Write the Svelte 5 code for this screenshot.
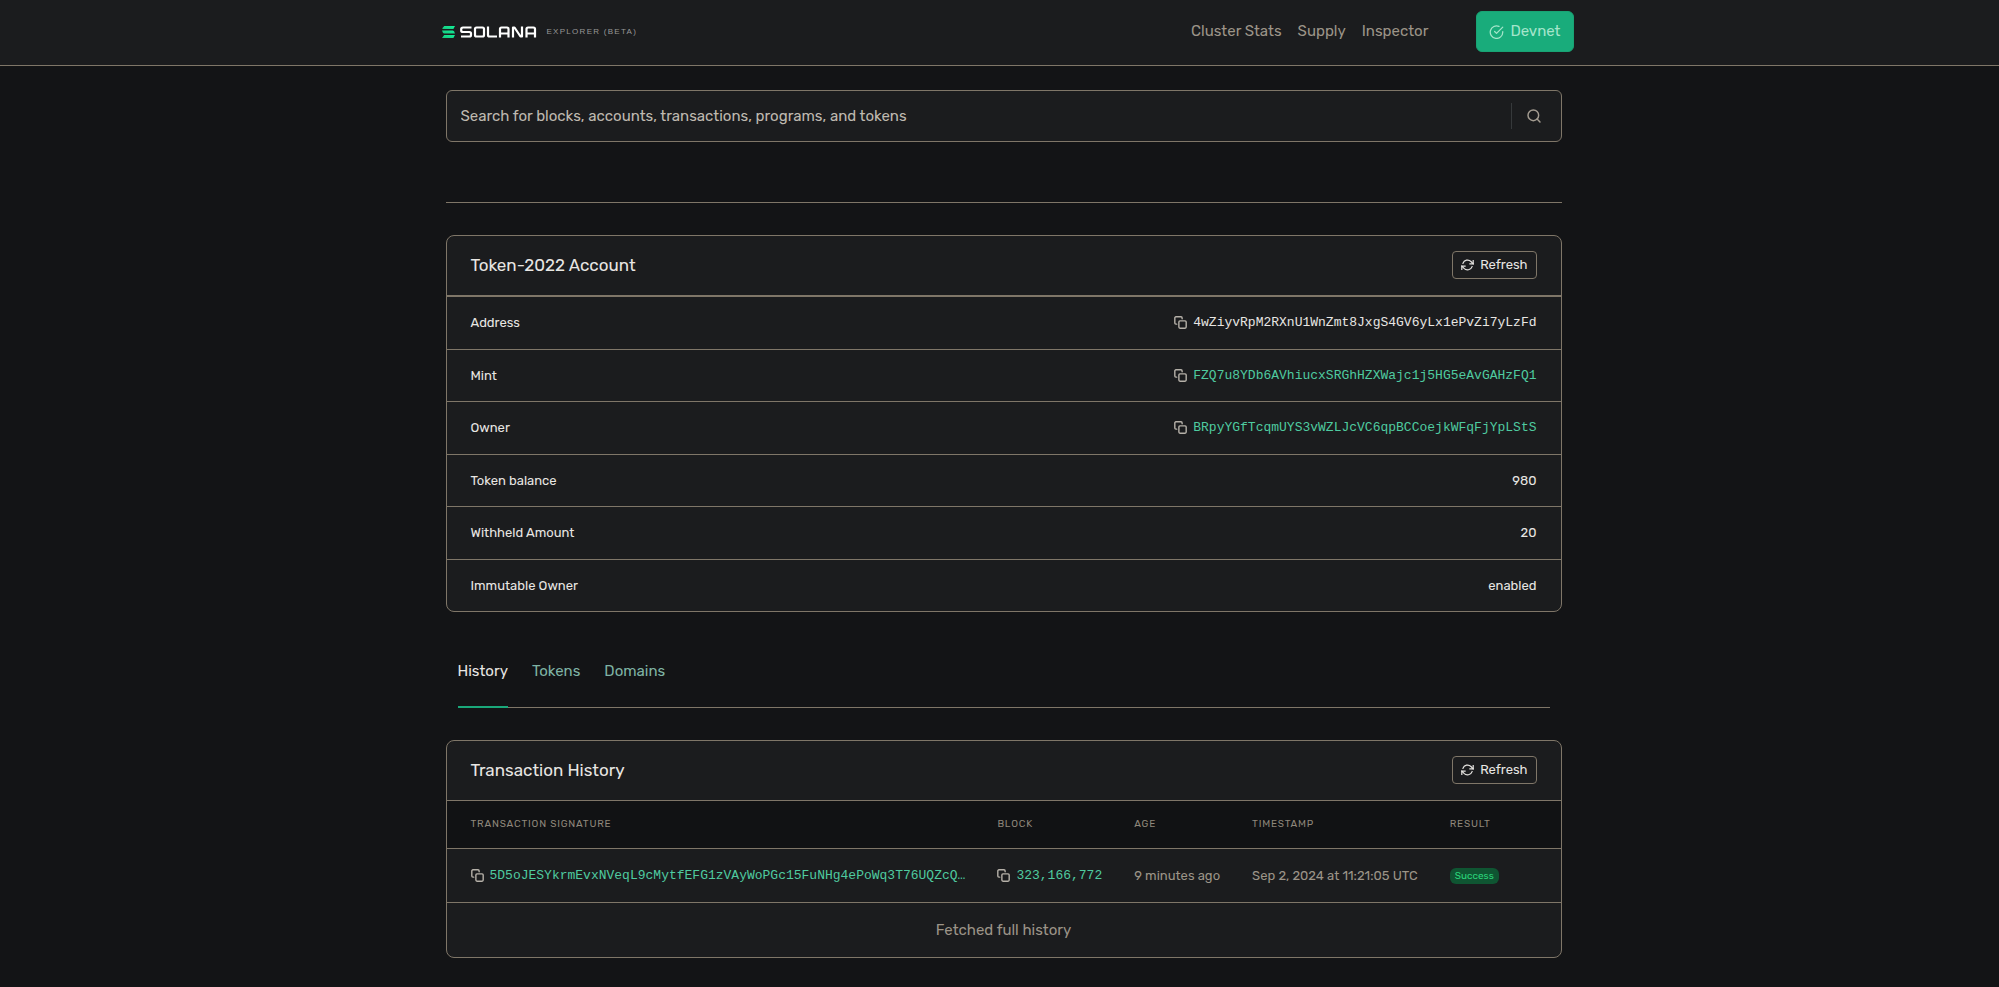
<script>
  const endpoint = 'Devnet';
  let search = $state('');

  const nav = ['Cluster Stats', 'Supply', 'Inspector'];

  const rows = [
    { label: 'Address', value: '4wZiyvRpM2RXnU1WnZmt8JxgS4GV6yLx1ePvZi7yLzFd', copy: true },
    { label: 'Mint', value: 'FZQ7u8YDb6AVhiucxSRGhHZXWajc1j5HG5eAvGAHzFQ1', copy: true, link: true },
    { label: 'Owner', value: 'BRpyYGfTcqmUYS3vWZLJcVC6qpBCCoejkWFqFjYpLStS', copy: true, link: true },
    { label: 'Token balance', value: '980' },
    { label: 'Withheld Amount', value: '20' },
    { label: 'Immutable Owner', value: 'enabled' },
  ];

  const tabs = ['History', 'Tokens', 'Domains'];
  let active = $state('History');

  const history = [
    {
      signature: '5D5oJESYkrmEvxNVeqL9cMytfEFG1zVAyWoPGc15FuNHg4ePoWq3T76UQZcQ…',
      block: '323,166,772',
      age: '9 minutes ago',
      time: 'Sep 2, 2024 at 11:21:05 UTC',
      result: 'Success',
    },
  ];

  function copyText(text) {
    navigator.clipboard?.writeText(text);
  }
</script>

{#snippet copyIcon(text)}
  <button class="copy" type="button" aria-label="Copy" onclick={() => copyText(text)}>
    <svg viewBox="0 0 24 24" width="13" height="13" fill="none" stroke="currentColor" stroke-width="2.6" stroke-linecap="round" stroke-linejoin="round">
      <rect x="9" y="9" width="13.5" height="13.5" rx="2" />
      <path d="M5 15H3.500a2 2 0 0 1-2-2V3.500a2 2 0 0 1 2-2H13a2 2 0 0 1 2 2V5" />
    </svg>
  </button>
{/snippet}

{#snippet refreshButton()}
  <button class="refresh" type="button">
    <svg viewBox="0 0 24 24" width="13" height="13" fill="none" stroke="currentColor" stroke-width="2.2" stroke-linecap="square" stroke-linejoin="miter">
      <path d="M22.500 3v6h-6" />
      <path d="M1.500 19v-6h6" />
      <path d="M3.500 8a9 9 0 0 1 14.900-3.400L22.500 9M1.500 13l4.100 4.400A9 9 0 0 0 20.500 14" />
    </svg>
    Refresh
  </button>
{/snippet}

<div class="page">
  <header>
    <div class="container bar">
      <a class="brand" href="#home" aria-label="Solana Explorer">
        <svg class="mark" viewBox="0 0 13 12" width="13" height="12">
          <defs>
            <linearGradient id="mark" x1="0" y1="1" x2="1" y2="0">
              <stop offset="0" stop-color="#17c37c" />
              <stop offset="1" stop-color="#12f29a" />
            </linearGradient>
          </defs>
          <g fill="url(#mark)">
            <path d="M2.200 0H13l-1.600 3H1.200Q-.2 3 .5 2Z" />
            <path d="M0 4.500h10.800q1.400 0 2.200 3H2.200Q.8 7.500 0 4.500Z" />
            <path d="M2.200 9H13l-1.600 3H0Z" />
          </g>
        </svg>
        <svg class="word" viewBox="0 0 77 12" width="77" height="12" fill="none" stroke="#fff" stroke-width="2.200" stroke-linejoin="round">
          <path d="M11.500 1.500H3Q1.200 1.500 1.200 3v1.500Q1.200 6 3 6h6.500q1.500 0 1.500 1.500V9q0 1.500-1.500 1.500H1" />
          <rect x="15" y="1.500" width="9" height="9" rx="1.500" />
          <path d="M28 .5V9q0 1.500 1.500 1.500H37" />
          <path d="M40 11.500V3q0-1.500 1.500-1.500H47q1.500 0 1.500 1.500v8.500M40 7.500h8.500" />
          <path d="M53 11.500V1.500h1.500L60.500 10.500H62V.5" />
          <path d="M66.500 11.500V3q0-1.500 1.500-1.500h5.500Q75 1.500 75 3v8.500M66.500 7.500H75" />
        </svg>
        <span class="tagline">EXPLORER (BETA)</span>
      </a>
      <nav>
        {#each nav as item}
          <a href="#{item}">{item}</a>
        {/each}
      </nav>
      <button class="cluster" type="button">
        <svg viewBox="0 0 24 24" width="15" height="15" fill="none" stroke="currentColor" stroke-width="2" stroke-linecap="round" stroke-linejoin="round">
          <path d="M22 12v1a10 10 0 1 1-6-9.100" />
          <path d="M22 5 12 15l-3-3" />
        </svg>
        {endpoint}
      </button>
    </div>
  </header>

  <main>
    <div class="container">
      <form class="search">
        <input type="text" aria-label="Search" placeholder="Search for blocks, accounts, transactions, programs, and tokens" bind:value={search} />
        <button type="submit" aria-label="Search">
          <svg viewBox="0 0 24 24" width="16" height="16" fill="none" stroke="currentColor" stroke-width="2.2" stroke-linecap="round" stroke-linejoin="round">
            <circle cx="11" cy="11" r="8" />
            <path d="m21 21-4.400-4.400" />
          </svg>
        </button>
      </form>

      <hr />

      <section class="card">
        <div class="card-header">
          <h1>Token-2022 Account</h1>
          {@render refreshButton()}
        </div>
        <table class="details">
          <tbody>
            {#each rows as row}
              <tr>
                <th scope="row">{row.label}</th>
                <td>
                  {#if row.copy}
                    <span class="address">
                      {@render copyIcon(row.value)}
                      {#if row.link}
                        <a href="#{row.value}">{row.value}</a>
                      {:else}
                        <span>{row.value}</span>
                      {/if}
                    </span>
                  {:else}
                    {row.value}
                  {/if}
                </td>
              </tr>
            {/each}
          </tbody>
        </table>
      </section>

      <div class="tabs">
        {#each tabs as tab}
          <a href="#{tab}" class:active={tab === active} onclick={() => (active = tab)}>{tab}</a>
        {/each}
      </div>

      <section class="card">
        <div class="card-header">
          <h2>Transaction History</h2>
          {@render refreshButton()}
        </div>
        <table class="history">
          <thead>
            <tr>
              <th>Transaction Signature</th>
              <th>Block</th>
              <th>Age</th>
              <th>Timestamp</th>
              <th>Result</th>
            </tr>
          </thead>
          <tbody>
            {#each history as tx}
              <tr>
                <td>
                  <span class="address">
                    {@render copyIcon(tx.signature)}
                    <a href="#tx">{tx.signature}</a>
                  </span>
                </td>
                <td>
                  <span class="address">
                    {@render copyIcon(tx.block)}
                    <a href="#block">{tx.block}</a>
                  </span>
                </td>
                <td>{tx.age}</td>
                <td>{tx.time}</td>
                <td><span class="badge">{tx.result}</span></td>
              </tr>
            {/each}
          </tbody>
        </table>
        <div class="card-footer">Fetched full history</div>
      </section>
    </div>
  </main>
</div>

<style>
  :global(body) {
    background: #131416;
  }

  .page {
    min-height: 100vh;
    box-sizing: border-box;
    padding-bottom: 29px;
    color: #e8e6e3;
    font: 15px/1.5 Rubik, Inter, sans-serif;
  }

  a {
    text-decoration: none;
  }

  button {
    font: inherit;
    cursor: pointer;
  }

  .container {
    box-sizing: border-box;
    width: 100%;
    max-width: 1140px;
    margin: 0 auto;
    padding: 0 12px;
  }

  header {
    padding-left: 8px;
    background: #1b1c1e;
    border-bottom: 1px solid #7f7668;
  }

  main {
    padding: 24px 0 0 8px;
  }

  .bar {
    display: flex;
    align-items: center;
    height: 65px;
    padding: 0 0 2px 8px;
  }

  .brand {
    display: flex;
    align-items: center;
    gap: 5px;
  }

  .tagline {
    margin-left: 5px;
    color: #979797;
    font: 8px/12px "Liberation Sans", sans-serif;
    letter-spacing: 0.16em;
  }

  nav {
    display: flex;
    gap: 16px;
    margin-left: auto;
  }

  nav a {
    color: #9c9488;
  }

  .cluster {
    display: flex;
    align-items: center;
    gap: 6px;
    height: 41px;
    margin-left: 48px;
    padding: 0 12px;
    color: #a5e5cb;
    background: #19ac7b;
    border: 1px solid #19a374;
    border-radius: 6px;
  }

  .search {
    display: flex;
    align-items: center;
    height: 52px;
    box-sizing: border-box;
    background: #1b1c1e;
    border: 1px solid #7f7668;
    border-radius: 6px;
  }

  .search input {
    flex: 1;
    padding: 0 14px;
    color: inherit;
    font: inherit;
    background: none;
    border: 0;
    outline: 0;
  }

  .search input::placeholder {
    color: #bfb9b0;
    opacity: 1;
  }

  .search button {
    display: flex;
    align-items: center;
    height: 26px;
    padding: 0 19px 0 14px;
    color: #a39b90;
    background: none;
    border: 0;
    border-left: 1px solid #36393b;
  }

  hr {
    height: 1px;
    margin: 60px 0 32px;
    background: #7f7668;
    border: 0;
  }

  .card {
    background: #1b1c1e;
    border: 1px solid #7f7668;
    border-radius: 8px;
    overflow: hidden;
  }

  .card-header {
    display: flex;
    align-items: center;
    justify-content: space-between;
    box-sizing: border-box;
    height: 60px;
    padding: 0 24px 1px;
    border-bottom: 1px solid #7f7668;
  }

  h1,
  h2 {
    margin: 0;
    padding-top: 2px;
    font-size: 17px;
    font-weight: 400;
  }

  .refresh {
    display: flex;
    align-items: center;
    gap: 6px;
    height: 28px;
    padding: 0 8px;
    color: #e8e6e3;
    font-size: 13px;
    background: #1b1c1e;
    border: 1px solid #7f7668;
    border-radius: 4px;
  }

  table {
    width: 100%;
    border-collapse: separate;
    border-spacing: 0;
    font-size: 13px;
  }

  th {
    font-weight: 400;
    text-align: left;
  }

  .details th,
  .details td {
    padding: 16px 24px;
    border-top: 1px solid #7f7668;
  }

  .details td {
    text-align: right;
  }

  .address {
    display: inline-flex;
    align-items: center;
    gap: 6px;
    font-family: "Liberation Mono", monospace;
    vertical-align: top;
  }

  .address a {
    color: #4fcba0;
  }

  .copy {
    display: flex;
    padding: 0;
    color: #b5b0a8;
    background: none;
    border: 0;
  }

  .tabs {
    display: flex;
    gap: 24px;
    margin: 36px 12px 32px;
    border-bottom: 1px solid #7f7668;
  }

  .tabs a {
    height: 60px;
    padding-top: 12px;
    box-sizing: border-box;
    margin-bottom: -1px;
    color: #7fb3a4;
    border-bottom: 2px solid transparent;
  }

  .tabs a.active {
    color: #e8e6e3;
    border-color: #1aa87a;
  }

  .history th,
  .history td {
    padding: 16px 32px 16px 0;
    white-space: nowrap;
  }

  .history th:first-child,
  .history td:first-child {
    padding-left: 24px;
  }

  /* the last column takes the spare width */
  .history th:last-child {
    width: 100%;
  }

  .history th {
    padding-top: 15px;
    color: #8f877b;
    font-size: 10px;
    line-height: 16px;
    letter-spacing: 0.08em;
    text-transform: uppercase;
    background: #111214;
  }

  .history td {
    height: 21px;
    color: #9c9488;
    border-top: 1px solid #7f7668;
  }

  .badge {
    display: inline-block;
    padding: 0 5px;
    color: #2bd67b;
    font-size: 10px;
    line-height: 16px;
    vertical-align: middle;
    background: #0f5532;
    border-radius: 6px;
  }

  .card-footer {
    padding: 16px 24px 15px;
    color: #9c9488;
    text-align: center;
    border-top: 1px solid #7f7668;
  }
</style>
